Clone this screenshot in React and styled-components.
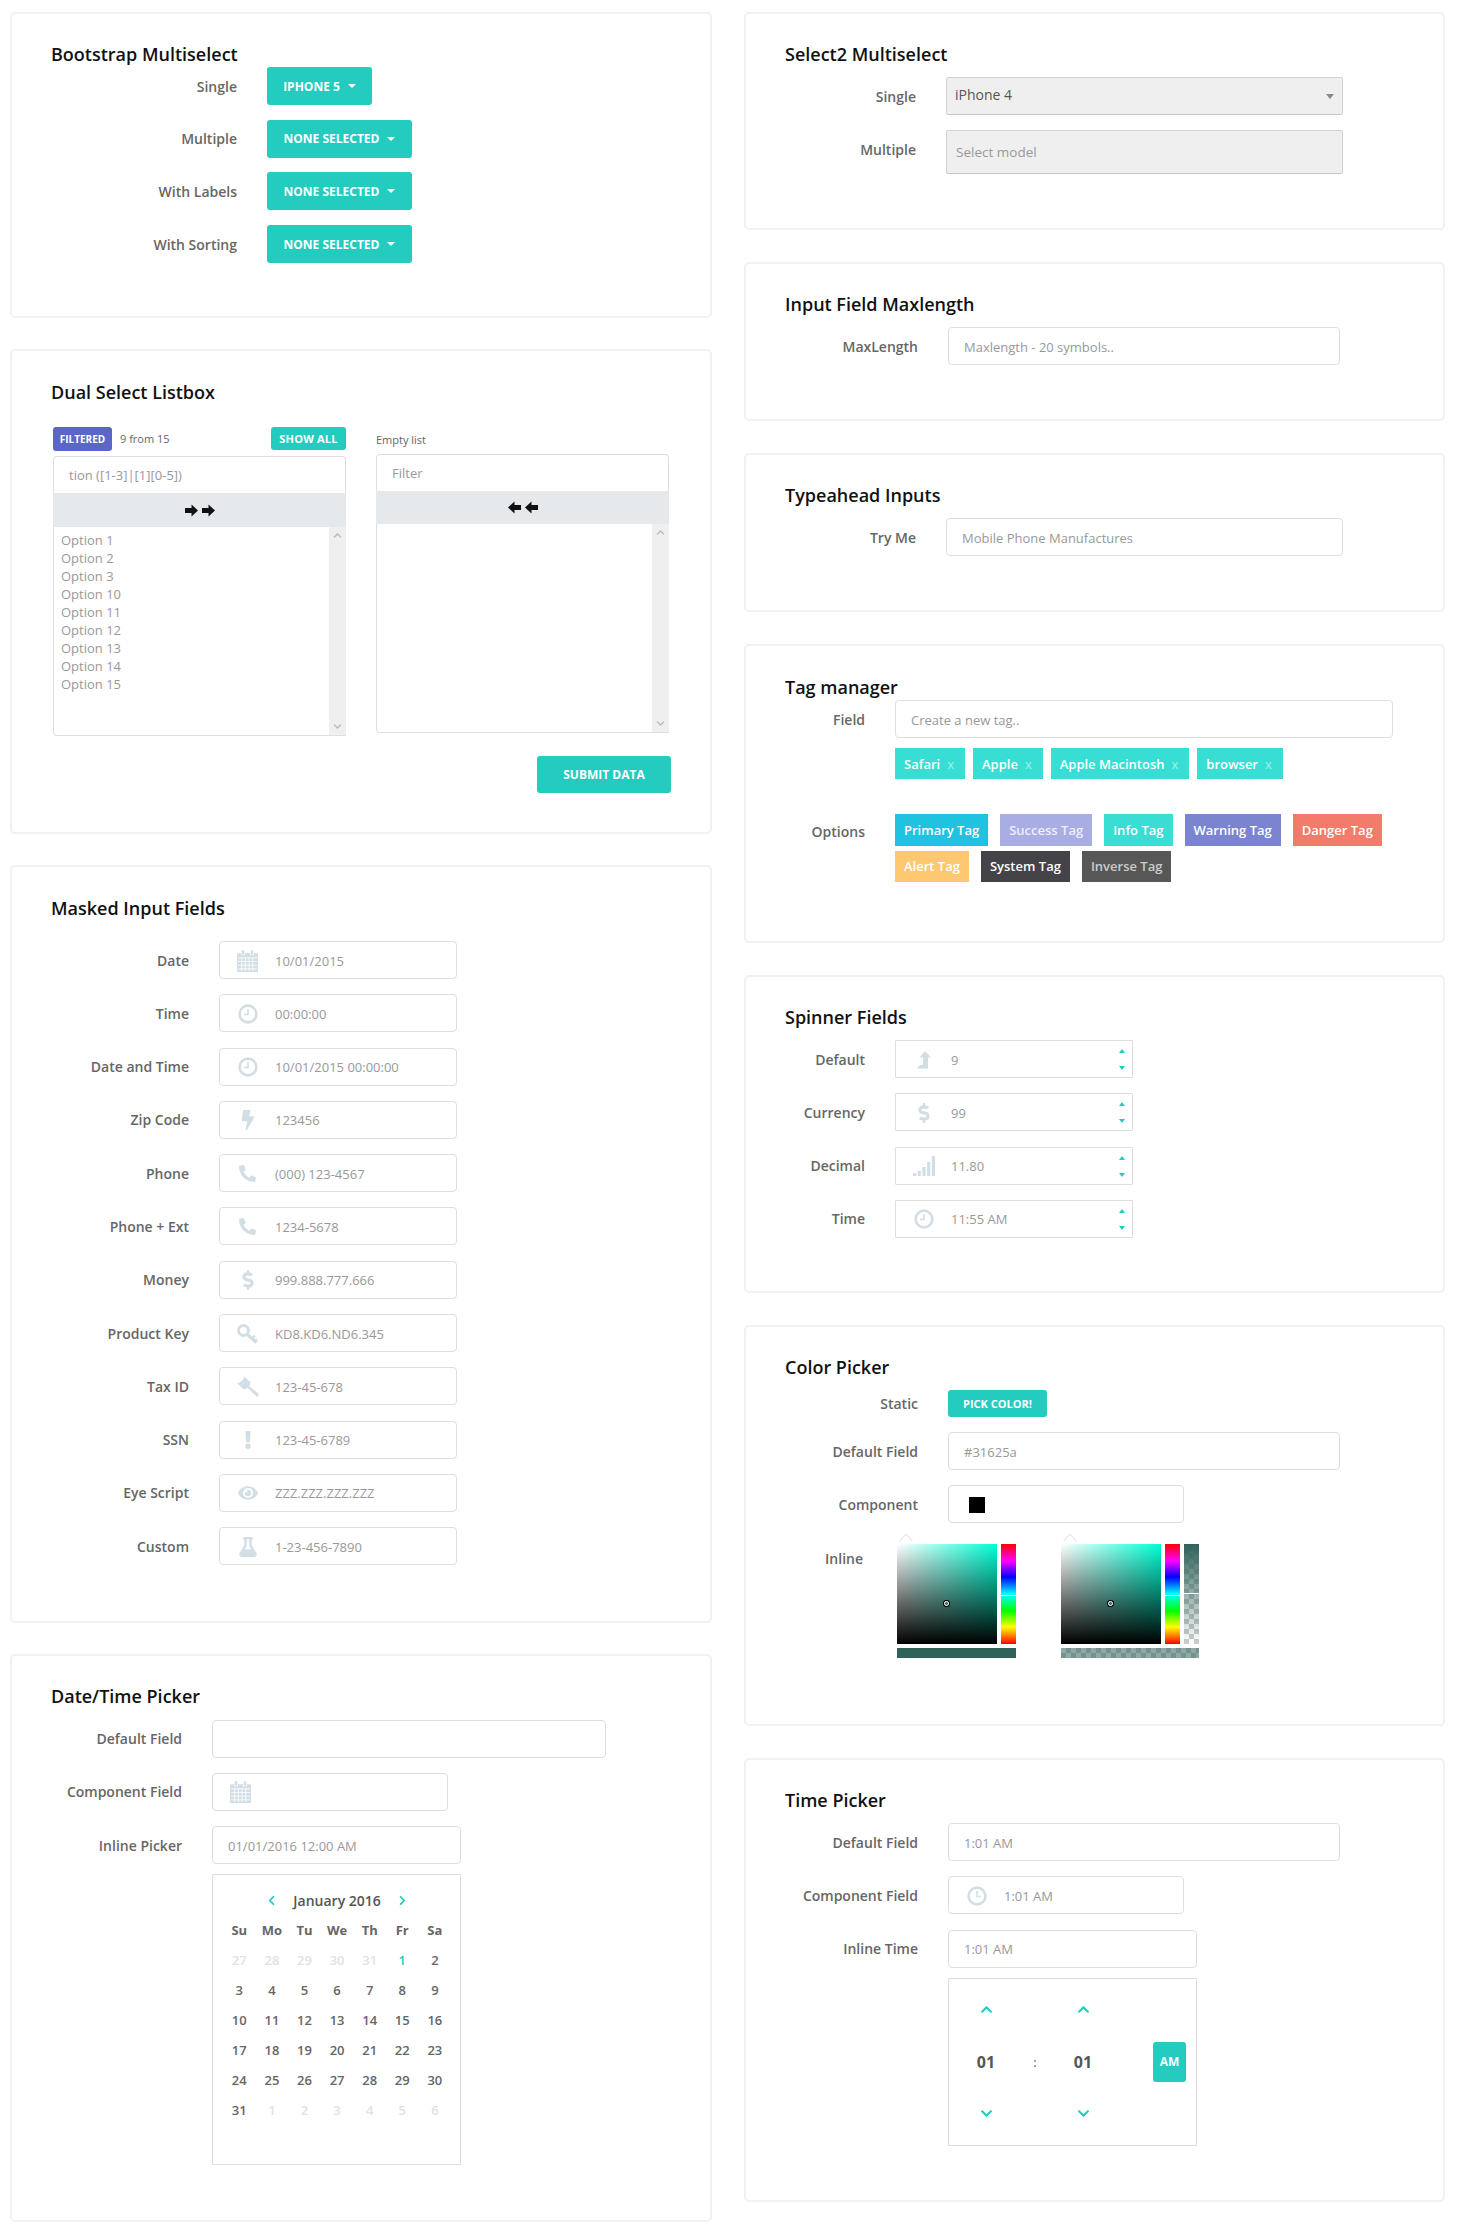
import React from 'react';
import styled, { createGlobalStyle } from 'styled-components';
import {
  FaBolt,
  FaChevronDown,
  FaChevronLeft,
  FaChevronRight,
  FaChevronUp,
  FaDollarSign,
  FaExclamation,
  FaEye,
  FaFlask,
  FaPhoneAlt,
} from 'react-icons/fa';

const TEAL = '#23ccbf';

const GlobalStyle = createGlobalStyle`
  html, body {
    margin: 0;
    background: #fff;
    font-family: "Open Sans", "Liberation Sans", sans-serif;
  }
  * { box-sizing: border-box; }
`;

const Page = styled.div`
  display: grid;
  grid-template-columns: 702px 701px;
  column-gap: 32px;
  padding: 12px 12px 10px 10px;
  align-items: start;
`;

const Column = styled.div`
  display: flex;
  flex-direction: column;
  gap: ${(p) => p.$gap}px;
`;

const Card = styled.section`
  height: ${(p) => p.$h}px;
  border: 2px solid #f1f1f1;
  border-radius: 5px;
  padding: ${(p) => p.$pt ?? 28}px 38px 0 38px;
  background: #fff;
`;

const Title = styled.h3`
  margin: 0 0 ${(p) => p.$mb}px 1px;
  font-size: 18px;
  line-height: 24px;
  font-weight: 600;
  color: #111;
`;

const Stack = styled.div`
  display: flex;
  flex-direction: column;
  gap: ${(p) => p.$gap ?? 15.3}px;
`;

const Row = styled.div`
  display: flex;
  align-items: ${(p) => (p.$top ? 'flex-start' : 'center')};
`;

const Label = styled.label`
  flex: none;
  width: ${(p) => p.$w}px;
  height: ${(p) => p.$h ?? 38}px;
  padding-right: ${(p) => p.$pr ?? 30}px;
  display: flex;
  align-items: center;
  justify-content: flex-end;
  font-size: 14px;
  font-weight: 600;
  color: #666;
`;

const Button = styled.button`
  display: inline-flex;
  align-items: center;
  justify-content: center;
  height: ${(p) => p.$h ?? 38}px;
  width: ${(p) => (p.$w ? `${p.$w}px` : 'auto')};
  padding: 0;
  border: 0;
  border-radius: 3px;
  background: ${TEAL};
  color: #fff;
  font-family: inherit;
  font-size: ${(p) => p.$fs ?? 12}px;
  font-weight: 700;
  text-transform: uppercase;
`;

const Caret = styled.span`
  margin-left: 8px;
  border-top: 4px solid #fff;
  border-left: 4px solid transparent;
  border-right: 4px solid transparent;
`;

const Field = styled.div`
  display: flex;
  align-items: center;
  flex: none;
  width: ${(p) => p.$w}px;
  height: ${(p) => p.$h ?? 38}px;
  padding: 1px 0 0 ${(p) => (p.$icon ? 0 : 15)}px;
  border: 1px solid #dedede;
  border-radius: ${(p) => p.$r ?? 4}px;
  background: #fff;
  font-size: 13px;
  color: #999;
`;

const IconSlot = styled.span`
  flex: none;
  width: 55px;
  display: flex;
  justify-content: center;
  align-items: center;
  color: #d3dee4;
  font-size: ${(p) => p.$s ?? 20}px;
`;

const Spin = styled.span`
  margin-left: auto;
  margin-right: 7px;
  display: flex;
  flex-direction: column;
  gap: 13px;
`;

const SpinArrow = styled.i`
  display: block;
  border-left: 3px solid transparent;
  border-right: 3px solid transparent;
  border-bottom: ${(p) => (p.$down ? 0 : `4px solid ${TEAL}`)};
  border-top: ${(p) => (p.$down ? `4px solid ${TEAL}` : 0)};
`;

const Select2 = styled.div`
  display: flex;
  align-items: ${(p) => (p.$multi ? 'center' : 'flex-start')};
  justify-content: space-between;
  flex: none;
  width: 397px;
  height: ${(p) => p.$h}px;
  padding: ${(p) => (p.$multi ? '0 8px 0 9px' : '7px 8px 0 8px')};
  border: 1px solid #d2d2d2;
  border-bottom-color: #c8c8c8;
  border-radius: 2px;
  background: #efefef;
  font-size: ${(p) => (p.$multi ? 13.5 : 14)}px;
  line-height: 20px;
  color: ${(p) => (p.$multi ? '#999' : '#555')};
`;

const SelectArrow = styled.i`
  margin-top: 9px;
  border-top: 5px solid #888;
  border-left: 4px solid transparent;
  border-right: 4px solid transparent;
`;

/* dual listbox */
const Dual = styled.div`
  display: grid;
  grid-template-columns: 293px 293px;
  column-gap: 30px;
  margin-left: 3px;
`;

const Panel = styled.div`
  display: flex;
  flex-direction: column;
`;

const PanelHead = styled.div`
  display: flex;
  align-items: ${(p) => (p.$h === 29 ? 'flex-start' : 'center')};
  height: ${(p) => p.$h}px;
  padding-bottom: ${(p) => (p.$h === 29 ? 0 : 3)}px;
  font-size: 11px;
  color: #666;
`;

const Badge = styled.span`
  display: inline-flex;
  align-items: center;
  justify-content: center;
  height: ${(p) => p.$h}px;
  width: ${(p) => p.$w}px;
  border-radius: 3px;
  background: ${(p) => p.$bg};
  color: #fff;
  font-size: ${(p) => p.$fs}px;
  font-weight: 700;
  letter-spacing: ${(p) => p.$ls ?? 0}px;
`;

const Count = styled.span`
  margin: 4px auto 0 8px;
`;

const FilterBox = styled.div`
  height: 37px;
  display: flex;
  align-items: center;
  padding-left: 15px;
  border: 1px solid #dedede;
  border-bottom: 0;
  border-radius: 4px 4px 0 0;
  font-size: 13px;
  color: #999;
`;

const MoveBar = styled.div`
  height: ${(p) => p.$h}px;
  display: flex;
  align-items: center;
  justify-content: center;
  gap: 4px;
  background: #e5e9ec;
`;

const ListArea = styled.div`
  display: flex;
  height: 209px;
  border-left: 1px solid #dedede;
  border-bottom: 1px solid #dedede;
  border-bottom-left-radius: 4px;
`;

const Options = styled.ul`
  flex: 1;
  margin: 0;
  padding: 4px 0 0 7px;
  list-style: none;
  font-size: 13px;
  line-height: 18px;
  color: #999;
`;

const Track = styled.div`
  flex: none;
  width: 17px;
  display: flex;
  flex-direction: column;
  justify-content: space-between;
  align-items: center;
  padding: 4px 0;
  background: #efefef;
  color: #bbb;
  font-size: 9px;
`;

const SubmitRow = styled.div`
  display: flex;
  justify-content: flex-end;
  margin-top: 20px;
  padding-right: 1px;
`;

/* tags */
const Tags = styled.div`
  display: flex;
  flex-wrap: wrap;
  gap: ${(p) => p.$rg}px ${(p) => p.$cg}px;
  margin-top: ${(p) => p.$mt ?? 0}px;
  width: 498px;
`;

const Tag = styled.span`
  display: inline-flex;
  align-items: center;
  height: ${(p) => p.$h}px;
  padding: 0 9px;
  background: ${(p) => p.$bg};
  color: ${(p) => p.$fg ?? '#fff'};
  font-size: 13px;
  font-weight: 600;
`;

const TagX = styled.span`
  margin-left: 7px;
  margin-right: 2px;
  font-weight: 400;
  color: rgba(255, 255, 255, 0.55);
`;

/* calendar */
const Calendar = styled.div`
  width: 249px;
  height: 291px;
  margin-top: 10px;
  padding: 10px;
  border: 1px solid #dedede;
`;

const CalGrid = styled.div`
  display: grid;
  grid-template-columns: repeat(7, 32.6px);
  grid-auto-rows: 30px;
  align-items: center;
  justify-items: center;
  font-size: 13px;
  font-weight: 600;
  color: #666;
`;

const CalTitle = styled.span`
  grid-column: 3 / 6;
  font-size: 14px;
  color: #555;
`;

const CalNav = styled.span`
  display: flex;
  color: ${TEAL};
  font-size: 11px;
`;

const CalHead = styled.span`
  font-weight: 700;
  color: #666;
`;

const Day = styled.span`
  color: ${(p) => (p.$muted ? '#e2e2e2' : p.$active ? TEAL : '#666')};
`;

/* colour picker */
const Pickers = styled.div`
  display: flex;
  gap: 42px;
`;

const Picker = styled.div`
  position: relative;
  padding-top: 6px;
  display: grid;
  grid-template-columns: 100px 15px ${(p) => (p.$alpha ? '15px' : '')};
  column-gap: 4px;
  row-gap: 4px;
  width: ${(p) => (p.$alpha ? 138 : 122)}px;
`;

const PickerCaret = styled.svg`
  position: absolute;
  top: -5px;
  left: 2px;
`;

const Saturation = styled.div`
  position: relative;
  height: 100px;
  background: linear-gradient(to bottom, rgba(0, 0, 0, 0), #000),
    linear-gradient(to right, #fff, #00ffd5);
`;

const Pointer = styled.span`
  position: absolute;
  left: 47px;
  top: 57px;
  width: 5px;
  height: 5px;
  border: 1px solid #fff;
  border-radius: 50%;
  box-shadow: 0 0 0 1px #000;
`;

const Hue = styled.div`
  position: relative;
  height: 100px;
  background: linear-gradient(
    to bottom,
    #f00 0%,
    #f0f 17%,
    #00f 33%,
    #0ff 50%,
    #0f0 67%,
    #ff0 83%,
    #f00 100%
  );
`;

const Alpha = styled.div`
  position: relative;
  height: 100px;
  background: linear-gradient(to bottom, #31625a, rgba(49, 98, 90, 0)),
    repeating-conic-gradient(#ccc 0 25%, #fff 0 50%) 0 0 / 10px 10px;
`;

const Marker = styled.i`
  position: absolute;
  left: 0;
  right: 0;
  top: ${(p) => p.$y}px;
  height: 1px;
  background: #fff;
`;

const Preview = styled.div`
  grid-column: 1 / -1;
  height: 10px;
  background: ${(p) =>
    p.$alpha
      ? 'linear-gradient(rgba(49,98,90,.55), rgba(49,98,90,.55)), repeating-conic-gradient(#ccc 0 25%, #fff 0 50%) 0 0 / 10px 10px'
      : '#31625a'};
`;

const Swatch = styled.span`
  width: 16px;
  height: 16px;
  margin-left: 20px;
  background: #000;
`;

/* time picker */
const TimeBox = styled.div`
  display: grid;
  grid-template-columns: 56px 42px 54px 43px 33px;
  grid-template-rows: repeat(3, 52px);
  align-content: center;
  align-items: center;
  justify-items: center;
  width: 249px;
  height: 168px;
  margin-top: 10px;
  padding-left: 9px;
  border: 1px solid #dedede;
  font-size: 16px;
  font-weight: 700;
  color: #555;
`;

const TimeArrow = styled.span`
  display: flex;
  color: ${TEAL};
  font-size: 13px;
  grid-column: ${(p) => p.$col};
`;

const Colon = styled.span`
  font-size: 13px;
  font-weight: 400;
`;

const MeridiemCell = styled.span`
  grid-column: 5;
  justify-self: stretch;
  display: flex;
`;

const ControlCol = styled.div`
  display: flex;
  flex-direction: column;
`;

/* drawn icons, the ones the packages draw differently */
const CalendarIcon = () => (
  <svg width="21" height="22" viewBox="0 0 20 21" fill="currentColor">
    <rect x="4.5" y="0" width="2.4" height="4.5" rx="1" />
    <rect x="13.1" y="0" width="2.4" height="4.5" rx="1" />
    <path d="M1 3h3v2h3.5V3h5v2H16V3h3a1 1 0 0 1 1 1v16a1 1 0 0 1-1 1H1a1 1 0 0 1-1-1V4a1 1 0 0 1 1-1z" />
    <path
      d="M1 7.5h18M1 11h18M1 14.5h18M1 18h18M4.5 7v13M8 7v13M11.5 7v13M15 7v13"
      stroke="#fff"
      strokeWidth="0.8"
    />
  </svg>
);

const ClockIcon = ({ right }) => (
  <svg width="20" height="20" viewBox="0 0 20 20" fill="none" stroke="currentColor">
    <circle cx="10" cy="10" r="8.4" strokeWidth="2.6" />
    <path d={right ? 'M10 5v5.5h4' : 'M10 5v5.5H6'} strokeWidth="1.6" />
  </svg>
);

const SignalIcon = () => (
  <svg width="22" height="20" viewBox="0 0 22 20" fill="currentColor">
    <rect x="0" y="17" width="3.2" height="3" />
    <rect x="4.7" y="15" width="3.2" height="5" />
    <rect x="9.4" y="11" width="3.2" height="9" />
    <rect x="14.1" y="6" width="3.2" height="14" />
    <rect x="18.8" y="0" width="3.2" height="20" />
  </svg>
);

const KeyIcon = () => (
  <svg width="21" height="20" viewBox="0 0 21 20" fill="none" stroke="currentColor">
    <circle cx="6.5" cy="6.5" r="5" strokeWidth="2.8" />
    <path d="M10.5 10.5L19.5 18.5" strokeWidth="3.4" />
    <path d="M15 14.5l3-3M18 17l2-2" strokeWidth="2.4" />
  </svg>
);

const GavelIcon = () => (
  <svg width="22" height="21" viewBox="0 0 22 21" fill="currentColor">
    <path d="M7.5 0.5L13.8 6.8 12.6 8 13.4 8.8 8.8 13.4 8 12.6 6.8 13.8 0.5 7.5 1.7 6.3 2.5 7.1 7.1 2.5 6.3 1.7z" />
    <path d="M10.5 11.8L12.4 9.9 21.2 17.6a1.6 1.6 0 0 1-0.1 2.3 1.6 1.6 0 0 1-2.3-0.1z" />
  </svg>
);

const LevelUpIcon = () => (
  <svg width="14" height="18" viewBox="0 0 14 18" fill="currentColor">
    <path d="M8 0L14 6.5H11V17.5H0L3 14H6V6.5H2.5z" />
  </svg>
);

const Arrow = ({ left }) => (
  <svg width="13" height="13" viewBox="0 0 13 13" fill="#111">
    <path d={left ? 'M0 6.5L6.5 0.5V4H13V9H6.5V12.5z' : 'M13 6.5L6.5 0.5V4H0V9H6.5V12.5z'} />
  </svg>
);

const masked = [
  ['Date', <CalendarIcon />, '10/01/2015'],
  ['Time', <ClockIcon />, '00:00:00'],
  ['Date and Time', <ClockIcon />, '10/01/2015 00:00:00'],
  ['Zip Code', <FaBolt />, '123456'],
  ['Phone', <FaPhoneAlt size={17} />, '(000) 123-4567'],
  ['Phone + Ext', <FaPhoneAlt size={17} />, '1234-5678'],
  ['Money', <FaDollarSign />, '999.888.777.666'],
  ['Product Key', <KeyIcon />, 'KD8.KD6.ND6.345'],
  ['Tax ID', <GavelIcon />, '123-45-678'],
  ['SSN', <FaExclamation size={18} />, '123-45-6789'],
  ['Eye Script', <FaEye />, 'ZZZ.ZZZ.ZZZ.ZZZ'],
  ['Custom', <FaFlask />, '1-23-456-7890'],
];

const spinners = [
  ['Default', <LevelUpIcon />, '9'],
  ['Currency', <FaDollarSign />, '99'],
  ['Decimal', <SignalIcon />, '11.80'],
  ['Time', <ClockIcon />, '11:55 AM'],
];

const optionTags = [
  ['Primary Tag', '#1fc3df'],
  ['Success Tag', '#a8aee3', '#eef'],
  ['Info Tag', '#38ded3'],
  ['Warning Tag', '#7a84cf'],
  ['Danger Tag', '#f27b6b'],
  ['Alert Tag', '#fec871'],
  ['System Tag', '#434348'],
  ['Inverse Tag', '#575757', '#ccc'],
];

const options = ['1', '2', '3', '10', '11', '12', '13', '14', '15'];
const weekdays = ['Su', 'Mo', 'Tu', 'We', 'Th', 'Fr', 'Sa'];
const before = [27, 28, 29, 30, 31];
const after = [1, 2, 3, 4, 5, 6];
const january = Array.from({ length: 31 }, (_, i) => i + 1);

const MultiButton = ({ text, w }) => (
  <Button $w={w}>
    {text}
    <Caret />
  </Button>
);

export default function App() {
  return (
    <>
      <GlobalStyle />
      <Page>
        <Column $gap={31}>
          <Card $h={306}>
            <Title $mb={1}>Bootstrap Multiselect</Title>
            <Stack $gap={14.7}>
              <Row>
                <Label $w={217}>Single</Label>
                <MultiButton text="iPhone 5" w={105} />
              </Row>
              <Row>
                <Label $w={217}>Multiple</Label>
                <MultiButton text="None selected" w={145} />
              </Row>
              <Row>
                <Label $w={217}>With Labels</Label>
                <MultiButton text="None selected" w={145} />
              </Row>
              <Row>
                <Label $w={217}>With Sorting</Label>
                <MultiButton text="None selected" w={145} />
              </Row>
            </Stack>
          </Card>

          <Card $h={485} $pt={29}>
            <Title $mb={23}>Dual Select Listbox</Title>
            <Dual>
              <Panel>
                <PanelHead $h={29}>
                  <Badge $w={59} $h={24} $bg="#5a67c9" $fs={10}>FILTERED</Badge>
                  <Count>9 from 15</Count>
                  <Badge $w={75} $h={23} $bg={TEAL} $fs={11} $ls={0.2}>SHOW ALL</Badge>
                </PanelHead>
                <FilterBox>tion ([1-3]|[1][0-5])</FilterBox>
                <MoveBar $h={34}>
                  <Arrow />
                  <Arrow />
                </MoveBar>
                <ListArea>
                  <Options>
                    {options.map((o) => (
                      <li key={o}>Option {o}</li>
                    ))}
                  </Options>
                  <Track>
                    <FaChevronUp />
                    <FaChevronDown />
                  </Track>
                </ListArea>
              </Panel>
              <Panel>
                <PanelHead $h={27}>Empty list</PanelHead>
                <FilterBox>Filter</FilterBox>
                <MoveBar $h={33}>
                  <Arrow left />
                  <Arrow left />
                </MoveBar>
                <ListArea>
                  <Options />
                  <Track>
                    <FaChevronUp />
                    <FaChevronDown />
                  </Track>
                </ListArea>
              </Panel>
            </Dual>
            <SubmitRow>
              <Button $w={134} $h={37} $fs={12}>Submit data</Button>
            </SubmitRow>
          </Card>

          <Card $h={758} $pt={29}>
            <Title $mb={21}>Masked Input Fields</Title>
            <Stack>
              {masked.map(([label, icon, value]) => (
                <Row key={label}>
                  <Label $w={169}>{label}</Label>
                  <Field $w={238} $icon>
                    <IconSlot>{icon}</IconSlot>
                    {value}
                  </Field>
                </Row>
              ))}
            </Stack>
          </Card>

          <Card $h={568}>
            <Title $mb={11.5}>Date/Time Picker</Title>
            <Stack>
              <Row>
                <Label $w={162}>Default Field</Label>
                <Field $w={394} />
              </Row>
              <Row>
                <Label $w={162}>Component Field</Label>
                <Field $w={236} $icon>
                  <IconSlot><CalendarIcon /></IconSlot>
                </Field>
              </Row>
              <Row $top>
                <Label $w={162}>Inline Picker</Label>
                <ControlCol>
                  <Field $w={249}>01/01/2016 12:00 AM</Field>
                  <Calendar>
                    <CalGrid>
                      <span />
                      <CalNav><FaChevronLeft /></CalNav>
                      <CalTitle>January 2016</CalTitle>
                      <CalNav><FaChevronRight /></CalNav>
                      <span />
                      {weekdays.map((d) => (
                        <CalHead key={d}>{d}</CalHead>
                      ))}
                      {before.map((d) => (
                        <Day key={`b${d}`} $muted>{d}</Day>
                      ))}
                      {january.map((d) => (
                        <Day key={d} $active={d === 1}>{d}</Day>
                      ))}
                      {after.map((d) => (
                        <Day key={`a${d}`} $muted>{d}</Day>
                      ))}
                    </CalGrid>
                  </Calendar>
                </ControlCol>
              </Row>
            </Stack>
          </Card>
        </Column>

        <Column $gap={32}>
          <Card $h={218}>
            <Title $mb={11}>Select2 Multiselect</Title>
            <Stack $gap={15}>
              <Row>
                <Label $w={162}>Single</Label>
                <Select2 $h={38}>
                  iPhone 4
                  <SelectArrow />
                </Select2>
              </Row>
              <Row $top>
                <Label $w={162}>Multiple</Label>
                <Select2 $h={44} $multi>Select model</Select2>
              </Row>
            </Stack>
          </Card>

          <Card $h={159}>
            <Title $mb={11}>Input Field Maxlength</Title>
            <Row>
              <Label $w={164}>MaxLength</Label>
              <Field $w={392}>Maxlength - 20 symbols..</Field>
            </Row>
          </Card>

          <Card $h={159}>
            <Title $mb={11}>Typeahead Inputs</Title>
            <Row>
              <Label $w={162}>Try Me</Label>
              <Field $w={397}>Mobile Phone Manufactures</Field>
            </Row>
          </Card>

          <Card $h={299} $pt={29}>
            <Title $mb={1}>Tag manager</Title>
            <Row $top>
              <Label $w={111}>Field</Label>
              <ControlCol>
                <Field $w={498}>Create a new tag..</Field>
                <Tags $mt={10} $rg={5} $cg={8}>
                  {['Safari', 'Apple', 'Apple Macintosh', 'browser'].map((t) => (
                    <Tag key={t} $h={31} $bg="#38ded3">
                      {t}
                      <TagX>x</TagX>
                    </Tag>
                  ))}
                </Tags>
              </ControlCol>
            </Row>
            <Row $top>
              <Label $w={111} $h={104}>Options</Label>
              <Tags $mt={35} $rg={5} $cg={12}>
                {optionTags.map(([t, bg, fg]) => (
                  <Tag key={t} $h={31.5} $bg={bg} $fg={fg}>{t}</Tag>
                ))}
              </Tags>
            </Row>
          </Card>

          <Card $h={318}>
            <Title $mb={11}>Spinner Fields</Title>
            <Stack>
              {spinners.map(([label, icon, value]) => (
                <Row key={label}>
                  <Label $w={111}>{label}</Label>
                  <Field $w={238} $icon $r={1}>
                    <IconSlot>{icon}</IconSlot>
                    {value}
                    <Spin>
                      <SpinArrow />
                      <SpinArrow $down />
                    </Spin>
                  </Field>
                </Row>
              ))}
            </Stack>
          </Card>

          <Card $h={401}>
            <Title $mb={11}>Color Picker</Title>
            <Stack $gap={15}>
              <Row>
                <Label $w={164} $h={27}>Static</Label>
                <Button $w={99} $h={27} $fs={11}>Pick color!</Button>
              </Row>
              <Row>
                <Label $w={164}>Default Field</Label>
                <Field $w={392}>#31625a</Field>
              </Row>
              <Row>
                <Label $w={164}>Component</Label>
                <Field $w={236} $icon>
                  <Swatch />
                </Field>
              </Row>
              <Row $top>
                <Label $w={113} $pr={34} $h={40}>Inline</Label>
                <Pickers>
                  <Picker>
                    <PickerCaret width="14" height="9" viewBox="0 0 14 9" fill="none" stroke="#ddd">
                      <path d="M0.5 8.5L7 1l6.5 7.5" />
                    </PickerCaret>
                    <Saturation><Pointer /></Saturation>
                    <Hue><Marker $y={51} /></Hue>
                    <Preview />
                  </Picker>
                  <Picker $alpha>
                    <PickerCaret width="14" height="9" viewBox="0 0 14 9" fill="none" stroke="#ddd">
                      <path d="M0.5 8.5L7 1l6.5 7.5" />
                    </PickerCaret>
                    <Saturation><Pointer /></Saturation>
                    <Hue><Marker $y={51} /></Hue>
                    <Alpha><Marker $y={49} /></Alpha>
                    <Preview $alpha />
                  </Picker>
                </Pickers>
              </Row>
            </Stack>
          </Card>

          <Card $h={444} $pt={28}>
            <Title $mb={11}>Time Picker</Title>
            <Stack>
              <Row>
                <Label $w={164}>Default Field</Label>
                <Field $w={392}>1:01 AM</Field>
              </Row>
              <Row>
                <Label $w={164}>Component Field</Label>
                <Field $w={236} $icon>
                  <IconSlot><ClockIcon right /></IconSlot>
                  1:01 AM
                </Field>
              </Row>
              <Row $top>
                <Label $w={164}>Inline Time</Label>
                <ControlCol>
                  <Field $w={249}>1:01 AM</Field>
                  <TimeBox>
                    <TimeArrow $col={1}><FaChevronUp /></TimeArrow>
                    <TimeArrow $col={3}><FaChevronUp /></TimeArrow>
                    <span />
                    <span />
                    <span>01</span>
                    <Colon>:</Colon>
                    <span>01</span>
                    <span />
                    <MeridiemCell>
                      <Button $w={33} $h={40} $fs={12}>AM</Button>
                    </MeridiemCell>
                    <TimeArrow $col={1}><FaChevronDown /></TimeArrow>
                    <TimeArrow $col={3}><FaChevronDown /></TimeArrow>
                  </TimeBox>
                </ControlCol>
              </Row>
            </Stack>
          </Card>
        </Column>
      </Page>
    </>
  );
}
